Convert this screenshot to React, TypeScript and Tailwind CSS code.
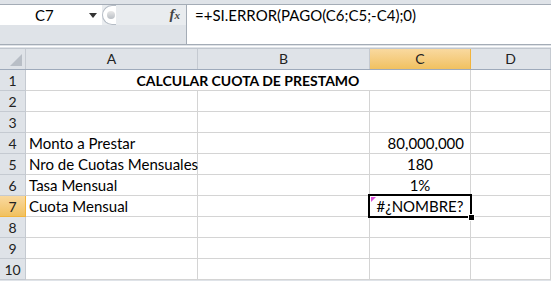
import React from "react";

const F = { fontFamily: "Lato, 'Open Sans', sans-serif" };

const cols = [
  { k: "A", w: "w-[172px]" },
  { k: "B", w: "w-[172px]" },
  { k: "C", w: "w-[101px]" },
  { k: "D", w: "w-[80px]" },
];

type Cell = { t?: string; align?: string; bold?: boolean };

const data: Record<number, Cell[]> = {
  4: [{ t: "Monto a Prestar" }, {}, { t: "80,000,000", align: "right" }, {}],
  5: [{ t: "Nro de Cuotas Mensuales" }, {}, { t: "180", align: "center" }, {}],
  6: [{ t: "Tasa Mensual" }, {}, { t: "1%", align: "center" }, {}],
  7: [{ t: "Cuota Mensual" }, {}, { t: "#¿NOMBRE?", align: "center" }, {}],
};

export default function App() {
  return (
    <div
      className="relative w-[551px] h-[281px] overflow-hidden bg-[#dfe3e8] text-black"
      style={F}
    >
      {/* formula bar */}
      <div className="h-[4px] bg-[#dfe3e8]" />
      <div className="flex h-[41px] border-t border-b border-[#a4acb6]">
        <div className="flex flex-col w-[186px]">
          <div className="flex h-[20px]">
            <div className="relative w-[102px] bg-white">
              <span className="absolute left-[35px] top-[1px] text-[15px] leading-[18px]">C7</span>
              <svg className="absolute left-[89px] top-[8px]" width="8" height="5" viewBox="0 0 8 5">
                <path d="M0 0H8L4 5Z" fill="#333" />
              </svg>
            </div>
            <div className="relative flex-1 bg-[#e9ecef]">
              <div className="absolute left-0 top-0 w-[14px] h-[20px] rounded-l-full bg-white border border-[#b5bcc5] border-r-0" />
              <div className="absolute left-[5px] top-[6px] w-[8px] h-[8px] rounded-full bg-gradient-to-b from-[#e8e8e8] to-[#b9bec4]" />
              <span
                className="absolute right-[6px] top-[0px] text-[15px] italic font-bold leading-[18px] text-[#444]"
                style={{ fontFamily: "'Liberation Serif', serif" }}
              >
                f<span className="text-[11px]">x</span>
              </span>
            </div>
          </div>
          <div className="flex-1 bg-[#dfe3e8]" />
        </div>
        <div className="flex-1 bg-white border-l border-[#a4acb6] pl-[8px] pt-[1px] text-[15px] leading-[18px]">
          =+SI.ERROR(PAGO(C6;C5;-C4);0)
        </div>
      </div>
      {/* strip */}
      <div className="h-[4px] bg-[#dfe3e8] flex flex-col">
        <div className="h-[1px]" />
        <div className="h-[1px] bg-white" />
        <div className="h-[1px]" />
        <div className="h-[1px] bg-[#c0c6ce]" />
      </div>
      {/* grid */}
      <div className="bg-white">
        <div className="flex h-[21px] bg-[#dfe3e8] border-b border-[#9eaabb]">
          <div className="relative w-[26px] border-r border-[#c5cad1]">
            <svg className="absolute right-[3px] bottom-[3px]" width="12" height="12" viewBox="0 0 12 12">
              <path d="M12 0V12H0Z" fill="#b8bec6" />
            </svg>
          </div>
          {cols.map((c) => (
            <div
              key={c.k}
              className={`${c.w} flex items-center justify-center border-r text-[14px] leading-none ${
                c.k === "C"
                  ? "bg-gradient-to-b from-[#f9d99f] to-[#f1c15f] border-[#f2b43c]"
                  : "border-[#c5cad1]"
              } text-[#222]`}
            >
              {c.k}
            </div>
          ))}
        </div>
        {Array.from({ length: 10 }, (_, i) => i + 1).map((r) => (
          <div key={r} className="flex h-[21px]">
            <div
              className={`w-[26px] flex items-center justify-center border-r border-b text-[14px] text-[#222] ${
                r === 7
                  ? "bg-gradient-to-b from-[#f9d99f] to-[#f1c15f] border-[#f2b43c]"
                  : "bg-[#dfe3e8] border-[#c5cad1]"
              }`}
            >
              {r}
            </div>
            {r === 1 ? (
              <>
                <div className="w-[445px] flex items-center justify-center border-r border-b border-[#d4d4d4] text-[14px] font-bold">
                  CALCULAR CUOTA DE PRESTAMO
                </div>
                <div className="w-[80px] border-r border-b border-[#d4d4d4]" />
              </>
            ) : (
              cols.map((c, j) => {
                const cell = data[r]?.[j] ?? {};
                return (
                  <div
                    key={c.k}
                    className={`${c.w} flex items-center px-[3px] border-r border-b border-[#d4d4d4] text-[15px] whitespace-nowrap ${
                      cell.align === "right"
                        ? "justify-end pr-[6px]"
                        : cell.align === "center"
                        ? "justify-center"
                        : "justify-start"
                    }`}
                  >
                    {cell.t}
                  </div>
                );
              })
            )}
          </div>
        ))}
      </div>
      {/* selection */}
      <div className="absolute left-[368px] top-[194px] w-[104px] h-[24px] border-2 border-black" />
      <svg className="absolute left-[371px] top-[197px]" width="5" height="5" viewBox="0 0 5 5">
        <path d="M0 0H5L0 5Z" fill="#d94fd9" />
      </svg>
      <div className="absolute left-[468px] top-[214px] w-[7px] h-[7px] bg-black border border-white" />
    </div>
  );
}
